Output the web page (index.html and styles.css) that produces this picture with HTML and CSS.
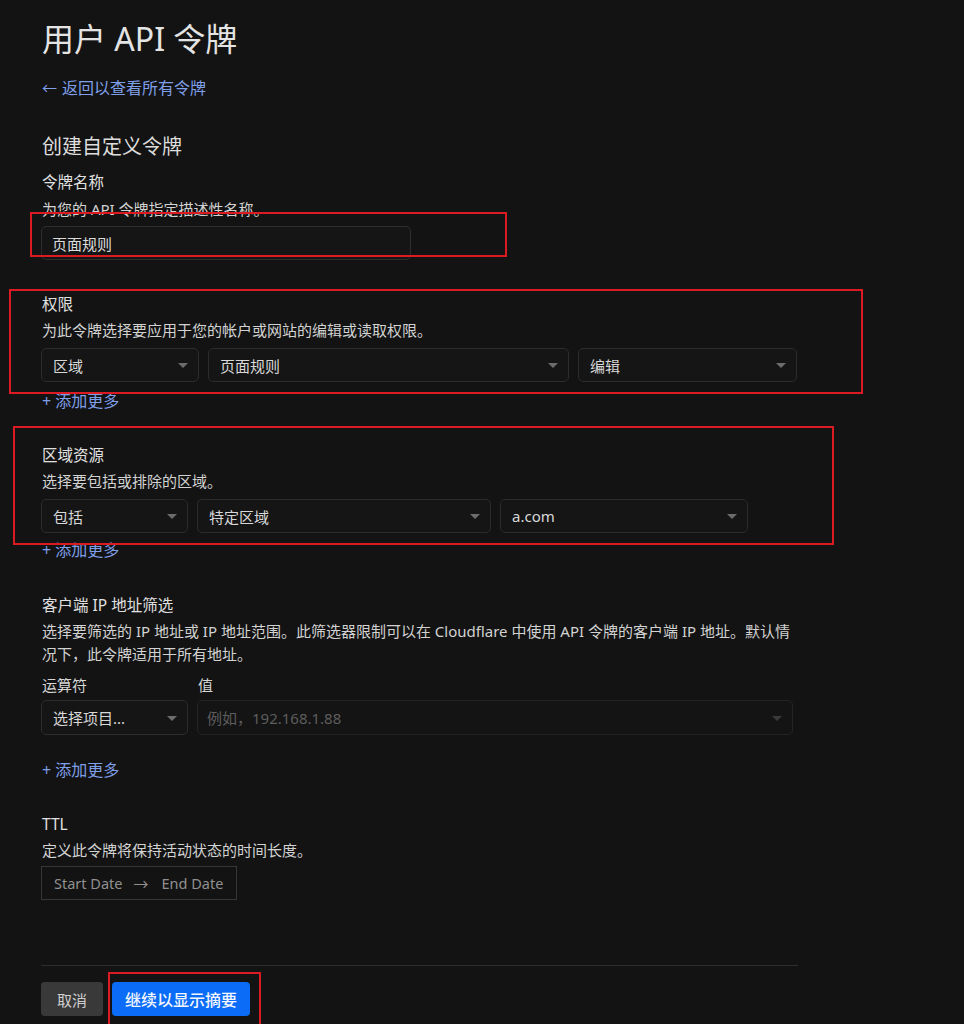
FILE: index.html
```html
<!DOCTYPE html>
<html lang="zh-CN">
<head>
<meta charset="utf-8">
<title>用户 API 令牌</title>
<link rel="stylesheet" href="styles.css">
</head>
<body>
<main class="page">
  <h1 class="title">用户 API 令牌</h1>
  <a class="back" href="#"><span class="back-arrow">←</span>返回以查看所有令牌</a>

  <h2 class="subtitle">创建自定义令牌</h2>

  <section class="field name-field">
    <div class="label">令牌名称</div>
    <div class="desc">为您的 API 令牌指定描述性名称。</div>
    <div class="input name-input">页面规则</div>
  </section>

  <section class="field perm-field">
    <div class="label">权限</div>
    <div class="desc">为此令牌选择要应用于您的帐户或网站的编辑或读取权限。</div>
    <div class="row perm-row">
      <div class="select">区域<span class="caret"></span></div>
      <div class="select">页面规则<span class="caret"></span></div>
      <div class="select">编辑<span class="caret"></span></div>
    </div>
    <a class="add" href="#">+ 添加更多</a>
  </section>

  <section class="field zone-field">
    <div class="label">区域资源</div>
    <div class="desc">选择要包括或排除的区域。</div>
    <div class="row zone-row">
      <div class="select">包括<span class="caret"></span></div>
      <div class="select">特定区域<span class="caret"></span></div>
      <div class="select latin">a.com<span class="caret"></span></div>
    </div>
    <a class="add add-zone" href="#">+ 添加更多</a>
  </section>

  <section class="field ip-field">
    <div class="label">客户端 IP 地址筛选</div>
    <div class="desc multi">选择要筛选的 IP 地址或 IP 地址范围。此筛选器限制可以在 Cloudflare 中使用 API 令牌的客户端 IP 地址。默认情况下，此令牌适用于所有地址。</div>
    <div class="row ip-labels">
      <div class="sublabel">运算符</div>
      <div class="sublabel">值</div>
    </div>
    <div class="row ip-row">
      <div class="select">选择项目...<span class="caret"></span></div>
      <div class="select disabled">例如，192.168.1.88<span class="caret dim"></span></div>
    </div>
    <a class="add add-ip" href="#">+ 添加更多</a>
  </section>

  <section class="field ttl-field">
    <div class="label latin">TTL</div>
    <div class="desc">定义此令牌将保持活动状态的时间长度。</div>
    <div class="daterange">
      <span>Start Date</span><span class="range-arrow">→</span><span>End Date</span>
    </div>
  </section>

  <hr class="divider">

  <div class="actions">
    <button class="btn btn-cancel" type="button">取消</button>
    <button class="btn btn-primary" type="button">继续以显示摘要</button>
  </div>
</main>

<div class="mark mark-1"></div>
<div class="mark mark-2"></div>
<div class="mark mark-3"></div>
<div class="mark mark-4"></div>
</body>
</html>
```

FILE: styles.css
```css
html, body {
  margin: 0;
  padding: 0;
  background: #131313;
  height: 1024px;
  overflow: hidden;
}

body {
  position: relative;
  font-family: "Noto Sans", "Noto Sans CJK SC", sans-serif;
  color: #d6d6d6;
}

.page {
  width: 757px;
  padding: 19px 0 0 41px;
  display: flex;
  flex-direction: column;
  align-items: flex-start;
}

.title {
  margin: 0 0 0 1px;
  font-size: 32px;
  line-height: 40px;
  font-weight: 400;
  color: #e4e4e4;
}

.back {
  margin: 19px 0 0 1px;
  font-size: 16px;
  line-height: 20px;
  color: #7f9fe8;
  text-decoration: none;
  display: flex;
  align-items: center;
}

.back-arrow {
  margin-right: 5px;
  font-size: 15px;
}

.subtitle {
  margin: 35px 0 0 1px;
  font-size: 20px;
  line-height: 28px;
  font-weight: 400;
  color: #dedede;
}

.field {
  display: flex;
  flex-direction: column;
  align-items: flex-start;
  width: 757px;
}

.label {
  margin-left: 1px;
  font-size: 15.5px;
  line-height: 22px;
  color: #e0e0e0;
}

.desc {
  margin: 5px 0 0 1px;
  font-size: 15px;
  line-height: 20px;
  color: #d2d2d2;
}

.desc.multi {
  line-height: 23px;
  width: 752px;
  margin-top: 4px;
}

.name-field { margin-top: 10px; }
.name-field .desc { margin-top: 6px; }

.input {
  box-sizing: border-box;
  height: 34px;
  border: 1px solid #2e2e2e;
  border-radius: 5px;
  background: #151515;
  font-size: 15px;
  display: flex;
  align-items: center;
  color: #dcdcdc;
}

.name-input {
  margin-top: 7px;
  width: 370px;
  padding-left: 10px;
}

.perm-field { margin-top: 33px; }
.zone-field { margin-top: 33px; }
.ip-field { margin-top: 34px; }
.ttl-field { margin-top: 33px; }

.row {
  display: grid;
}

.perm-row {
  margin-top: 8px;
  grid-template-columns: 158px 361px 219px;
  column-gap: 9px;
}

.zone-row {
  margin-top: 8px;
  grid-template-columns: 147px 294px 248px;
  column-gap: 9px;
}

.ip-labels {
  margin-top: 8px;
  grid-template-columns: 156px 200px;
}

.sublabel {
  margin-left: 1px;
  font-size: 15px;
  line-height: 22px;
  color: #d6d6d6;
}

.ip-row {
  margin-top: 4px;
  grid-template-columns: 147px 596px;
  column-gap: 9px;
}

.select {
  position: relative;
  box-sizing: border-box;
  height: 34px;
  border: 1px solid #2c2c2c;
  border-radius: 5px;
  background: #151515;
  padding-left: 11px;
  font-size: 15px;
  display: flex;
  align-items: center;
  color: #d8d8d8;
}

.ip-row .select { height: 35px; }

.select.disabled {
  border-color: #242424;
  background: #141414;
  color: #5d5d5d;
  padding-left: 9px;
}

.caret {
  position: absolute;
  right: 10px;
  top: 50%;
  margin-top: -2px;
  width: 0;
  height: 0;
  border-left: 5px solid transparent;
  border-right: 5px solid transparent;
  border-top: 5px solid #6c6c6c;
}

.caret.dim { border-top-color: #3a3a3a; }

.add {
  margin: 9px 0 0 1px;
  font-size: 16px;
  line-height: 20px;
  color: #7f9fe8;
  text-decoration: none;
}

.add-zone { margin-top: 7px; }
.add-ip { margin-top: 25px; }

.daterange {
  margin-top: 6px;
  box-sizing: border-box;
  width: 196px;
  height: 34px;
  border: 1px solid #363636;
  display: flex;
  align-items: center;
  padding-left: 12px;
  font-size: 14.5px;
  color: #909090;
}

.range-arrow {
  margin: 0 13px 0 11px;
  font-size: 15px;
}

.divider {
  margin: 65px 0 0 0;
  width: 757px;
  border: none;
  border-top: 1px solid #2d2d2d;
  height: 0;
}

.actions {
  margin-top: 16px;
  display: flex;
  gap: 9px;
}

.btn {
  height: 34px;
  border: none;
  border-radius: 4px;
  font-family: "Noto Sans", "Noto Sans CJK SC", sans-serif;
  font-size: 15px;
  cursor: pointer;
}

.btn-cancel {
  width: 62px;
  background: #393939;
  color: #d0d0d0;
}

.btn-primary {
  width: 138px;
  background: #0a6cf7;
  color: #f2f6ff;
  font-size: 16px;
  font-weight: 500;
}

.mark {
  position: absolute;
  box-sizing: border-box;
  border: 2px solid #db1a22;
  pointer-events: none;
}

.mark-1 { left: 30px; top: 212px; width: 477px; height: 45px; }
.mark-2 { left: 9px; top: 289px; width: 854px; height: 105px; }
.mark-3 { left: 13px; top: 426px; width: 821px; height: 119px; }
.mark-4 { left: 108px; top: 972px; width: 153px; height: 56px; }
```
